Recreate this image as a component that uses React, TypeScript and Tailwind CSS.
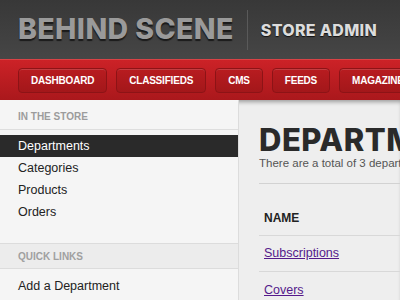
import React from "react";

const navItems = ["DASHBOARD", "CLASSIFIEDS", "CMS", "FEEDS", "MAGAZINE"];
const storeLinks = ["Departments", "Categories", "Products", "Orders"];

export default function App() {
    return (
        <div className="w-[400px] h-[300px] overflow-hidden bg-[#eeeeee] font-['Liberation_Sans',Arial,sans-serif]">
            {/* header */}
            <div className="h-[59px] bg-gradient-to-b from-[#383838] to-[#464646] flex items-center pl-[18px]">
                <span className="font-['Inter',sans-serif] font-extrabold text-[28.5px] leading-none tracking-[0.4px] text-[#9a9a9a] [text-shadow:0_2px_1px_#1a1a1a]">
                    BEHIND SCENE
                </span>
                <div className="w-px h-[40px] bg-[#5a5a5a] ml-[13px]" />
                <span className="ml-[13px] font-['Inter',sans-serif] font-extrabold text-[16px] leading-none tracking-[0.3px] text-[#dcdcdc] [text-shadow:0_1px_1px_#111]">
                    STORE ADMIN
                </span>
            </div>

            {/* nav */}
            <div className="h-[41px] bg-gradient-to-b from-[#cc2227] to-[#aa181c] border-t border-[#d94245] flex items-center gap-[9px] pl-[18px] whitespace-nowrap overflow-hidden">
                {navItems.map((n) => (
                    <div
                        key={n}
                        className="h-[25px] px-[12px] flex items-center rounded-[4px] bg-gradient-to-b from-[#b81c20] to-[#a3171a] border border-[#8d1316] shadow-[inset_0_1px_0_rgba(255,255,255,0.15)] text-white font-bold text-[10px] tracking-[-0.2px] shrink-0"
                    >
                        {n}
                    </div>
                ))}
            </div>

            <div className="flex h-[200px] shadow-[inset_0_4px_4px_-2px_rgba(0,0,0,0.35)]">
                {/* sidebar */}
                <div className="w-[239px] shrink-0 bg-[#f5f5f5] border-r border-[#dcdcdc]">
                    <div className="h-[30px] flex items-center pl-[18px] pt-[4px] border-b border-[#dedede] text-[10px] font-bold text-[#9c9c9c]">
                        IN THE STORE
                    </div>
                    <div className="pt-[5px]">
                        {storeLinks.map((l, i) => (
                            <div
                                key={l}
                                className={`h-[22px] flex items-center pl-[18px] text-[12.5px] ${
                                    i === 0 ? "bg-[#2a2a2a] text-white" : "text-[#222]"
                                }`}
                            >
                                {l}
                            </div>
                        ))}
                    </div>
                    <div className="mt-[20px] h-[26px] flex items-center pl-[18px] bg-[#ececec] border-y border-[#dcdcdc] text-[10px] font-bold text-[#a0a0a0]">
                        QUICK LINKS
                    </div>
                    <div className="h-[34px] flex items-center pl-[18px] text-[12.5px] text-[#222]">
                        Add a Department
                    </div>
                </div>

                {/* main */}
                <div className="flex-1 pl-[20px] pt-[24px] whitespace-nowrap overflow-hidden">
                    <div className="font-['Inter',sans-serif] font-extrabold text-[31px] leading-[32px] tracking-[0.5px] text-[#2a2a2a]">
                        DEPARTMENTS
                    </div>
                    <div className="text-[11.5px] text-[#555] -mt-[1px]">
                        There are a total of 3 departments
                    </div>
                    <div className="mt-[11px] border-t border-[#d2d2d2]" />
                    <div className="h-[52px] flex items-center pl-[5px] pt-[16px] border-b border-[#d8d8d8] text-[12px] font-bold text-[#222]">
                        NAME
                    </div>
                    <div className="h-[36px] flex items-center pl-[5px] border-b border-[#d8d8d8] text-[12.5px]">
                        <a href="#" className="underline text-[#551a8b]">Subscriptions</a>
                    </div>
                    <div className="h-[36px] flex items-center pl-[5px] text-[12.5px]">
                        <a href="#" className="underline text-[#551a8b]">Covers</a>
                    </div>
                </div>
            </div>
        </div>
    );
}
